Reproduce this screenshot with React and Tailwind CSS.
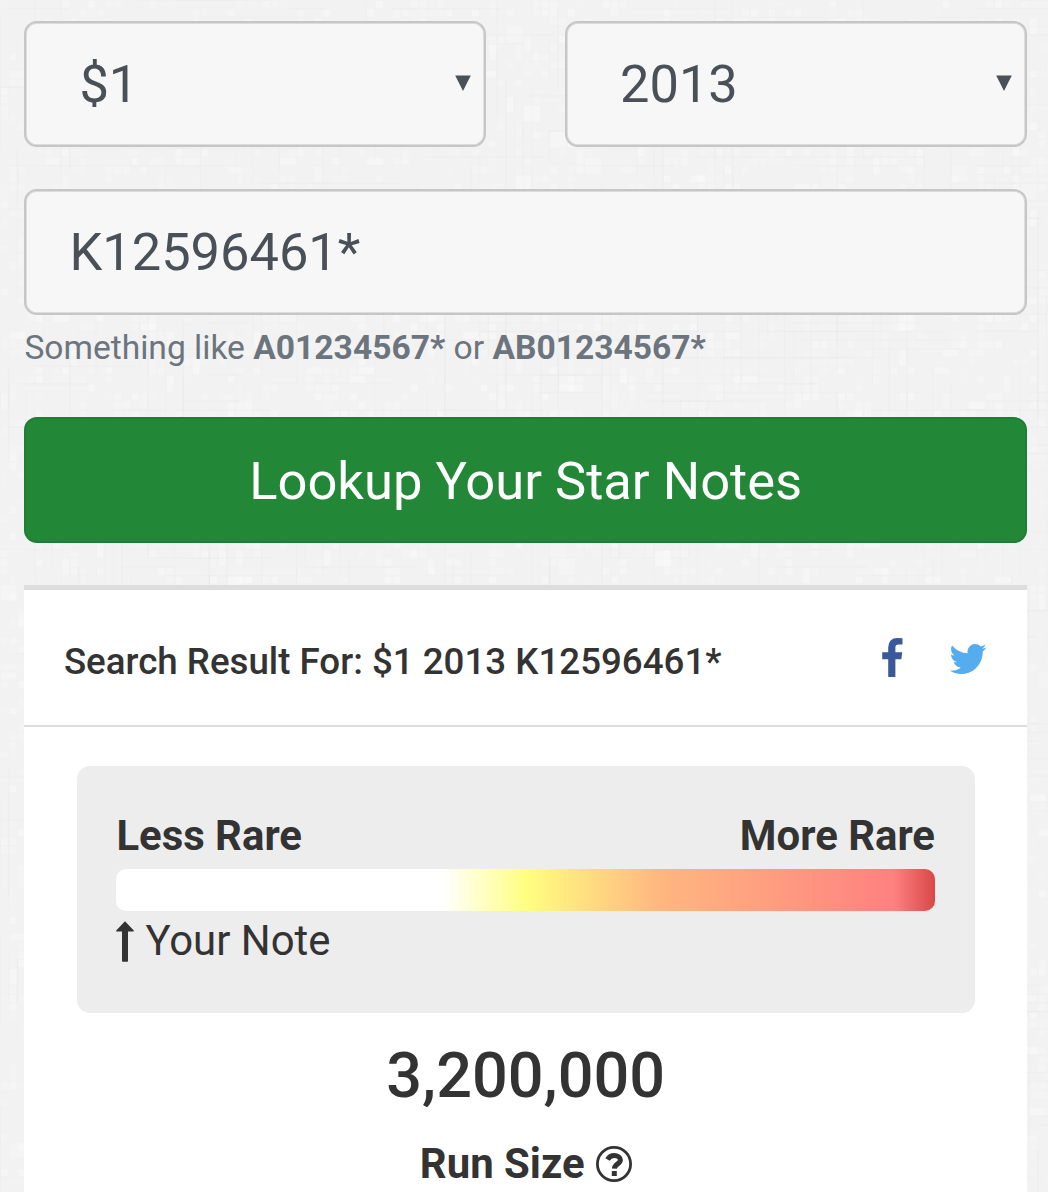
import React from 'react';

// small seeded generator, so the linen is the same on each render
const createRandom = (seed) => () => {
  seed = (seed * 16807) % 2147483647;
  return seed / 2147483647;
};

const buildLinen = () => {
  const random = createRandom(4217);
  const step = 8.72;
  const patches = [];
  const threads = [];
  for (let row = 0; row < 138; row++) {
    for (let col = 0; col < 122; col++) {
      if (random() < 0.26) {
        const wide = random() < 0.15 ? 2 : 1;
        const tall = random() < 0.15 ? 2 : 1;
        patches.push({
          x: col * step + 0.9,
          y: row * step + 0.9,
          w: wide * step - 1.8,
          h: tall * step - 1.8,
          o: 0.15 + random() * 0.35,
        });
      }
    }
  }
  for (let i = 0; i < 1300; i++) {
    const across = random() < 0.5;
    const length = 30 + random() * 110;
    const x = Math.floor(random() * 122) * step;
    const y = Math.floor(random() * 138) * step;
    threads.push({
      x: x - 0.8,
      y: y - 0.8,
      w: across ? length : 1.8,
      h: across ? 1.8 : length,
      o: 0.004 + random() * 0.009,
    });
  }
  return { patches, threads };
};

const linen = buildLinen();

const LinenBackground = () => (
  <svg className="absolute inset-0 -z-10" width="1048" height="1192" aria-hidden="true">
    {linen.patches.map((p, i) => (
      <rect key={`p${i}`} x={p.x} y={p.y} width={p.w} height={p.h} rx="1.5" fill="#fafafa" opacity={p.o} />
    ))}
    {linen.threads.map((t, i) => (
      <rect key={`t${i}`} x={t.x} y={t.y} width={t.w} height={t.h} fill="#000" opacity={t.o} />
    ))}
  </svg>
);

const FacebookIcon = () => (
  <svg className="h-[42px] w-[42px]" viewBox="0 0 1792 1792" fill="#3b5998">
    <path d="M1343 12v264h-157q-86 0-116 36t-30 108v189h293l-39 296h-254v759h-306v-759h-255v-296h255v-218q0-186 104-288.5t277-102.5q147 0 228 12z" />
  </svg>
);

const TwitterIcon = () => (
  <svg className="h-[42px] w-[42px]" viewBox="0 0 1792 1792" fill="#55acee">
    <path d="M1684 408q-67 98-162 167 1 14 1 42 0 130-38 259.5t-115.5 248.5-184.5 210.5-258 146-323 54.5q-271 0-496-145 35 4 78 4 225 0 401-138-105-2-188-64.5t-114-159.5q33 5 61 5 43 0 85-11-112-23-185.5-111.5t-73.5-205.5v-4q68 38 146 41-66-44-105-115t-39-154q0-88 44-163 121 149 294.5 238.5t371.5 99.5q-8-38-8-74 0-134 94.5-228.5t228.5-94.5q140 0 236 102 109-21 205-78-37 115-142 178 93-10 186-50z" />
  </svg>
);

const ArrowUpIcon = () => (
  <svg className="h-[41px] w-[18px]" viewBox="0 0 18 41" fill="#333">
    <path d="M9 0.3L17.8 9.6Q18.2 10.5 17.2 10.5H12V40Q12 40.7 11.3 40.7H6.7Q6 40.7 6 40V10.5H0.8Q-0.2 10.5 0.2 9.6Z" />
  </svg>
);

const QuestionIcon = () => (
  <svg className="h-[36px] w-[36px]" viewBox="0 0 36 36" fill="none" stroke="#333">
    <circle cx="18" cy="18" r="16.6" strokeWidth="2.8" />
    <path d="M11.5 13.4C13.1 10.6 15.2 9.4 18.2 9.4C21.5 9.4 24.4 11.3 24.4 14.1C24.4 18 18.6 17.8 18.4 22.6" strokeWidth="5" />
    <path d="M15.8 25h5v5h-5z" fill="#333" stroke="none" />
  </svg>
);

const fieldClass =
  'flex h-[125.5px] items-center rounded-[13px] border-2 border-[#c6c6c6] bg-[#f7f7f7] pt-[2px] text-[52.4px] text-[#495057] shadow-[inset_0_0_0_0.7px_#d4d4d4]';

const SelectField = ({ value }) => (
  <div className={`${fieldClass} w-[462px] justify-between pl-[53px] pr-[13.5px]`}>
    <span>{value}</span>
    <svg className="mb-[3px] h-[16px] w-[16px]" viewBox="0 0 16 16" fill="#495057">
      <path d="M0.2 0.5H15.8L8 16z" />
    </svg>
  </div>
);

const App = () => {
  return (
    <div className="relative isolate h-[1192px] w-[1048px] overflow-hidden bg-[#f2f2f2] pl-[24.4px] pr-[21px] pt-[21px] font-['Roboto',sans-serif] text-[#333]">
      <LinenBackground />

      <div className="flex justify-between">
        <SelectField value="$1" />
        <SelectField value="2013" />
      </div>

      <div className={`${fieldClass} mt-[42.5px] pl-[43px]`}>K12596461*</div>
      <p className="mt-[13.5px] h-[40px] text-[33.6px] leading-[40px] text-[#6c757d]">
        Something like <b className="font-bold">A01234567*</b> or <b className="font-bold">AB01234567*</b>
      </p>

      <button className="mt-[49px] flex h-[126px] w-full items-center justify-center rounded-[13px] border-2 border-[#1e7e34] bg-[#228838] pt-[2px] text-[52.5px] text-white">
        Lookup Your Star Notes
      </button>

      <div className="mt-[42px] h-[700px] border-t-[5px] border-[#ddd] bg-white">
        <div className="flex h-[136.5px] items-center justify-between border-b-2 border-[#ddd] pl-[39.5px] pr-[38px]">
          <h5 className="pt-[9px] text-[36.7px] font-medium">Search Result For: $1 2013 K12596461*</h5>
          <div className="flex gap-[34px] pt-[4px]">
            <FacebookIcon />
            <TwitterIcon />
          </div>
        </div>

        <div className="mx-[52.5px] mt-[39.5px] h-[246.5px] rounded-[13px] bg-[#ededed] px-[39.5px] pt-[39.5px]">
          <div className="flex h-[63px] items-center justify-between pb-[2px] text-[41.9px] font-bold">
            <span>Less Rare</span>
            <span>More Rare</span>
          </div>
          <div className="h-[42px] rounded-[10px] bg-[linear-gradient(to_right,#fff_40%,#ffff80_50%,#ffb880_66%,#ff8080_95%,#d94848_100%)]" />
          <div className="flex h-[63px] items-center gap-[11px] pb-[2px] text-[41.9px]">
            <ArrowUpIcon />
            <span>Your Note</span>
          </div>
        </div>

        <div className="mt-[25px] text-center text-[63px] font-medium leading-[75px]">3,200,000</div>
        <div className="mt-[20px] flex h-[63px] items-center justify-center gap-[11px] text-[41.9px] font-bold">
          <span>Run Size</span>
          <QuestionIcon />
        </div>
      </div>
    </div>
  );
};

export default App;
